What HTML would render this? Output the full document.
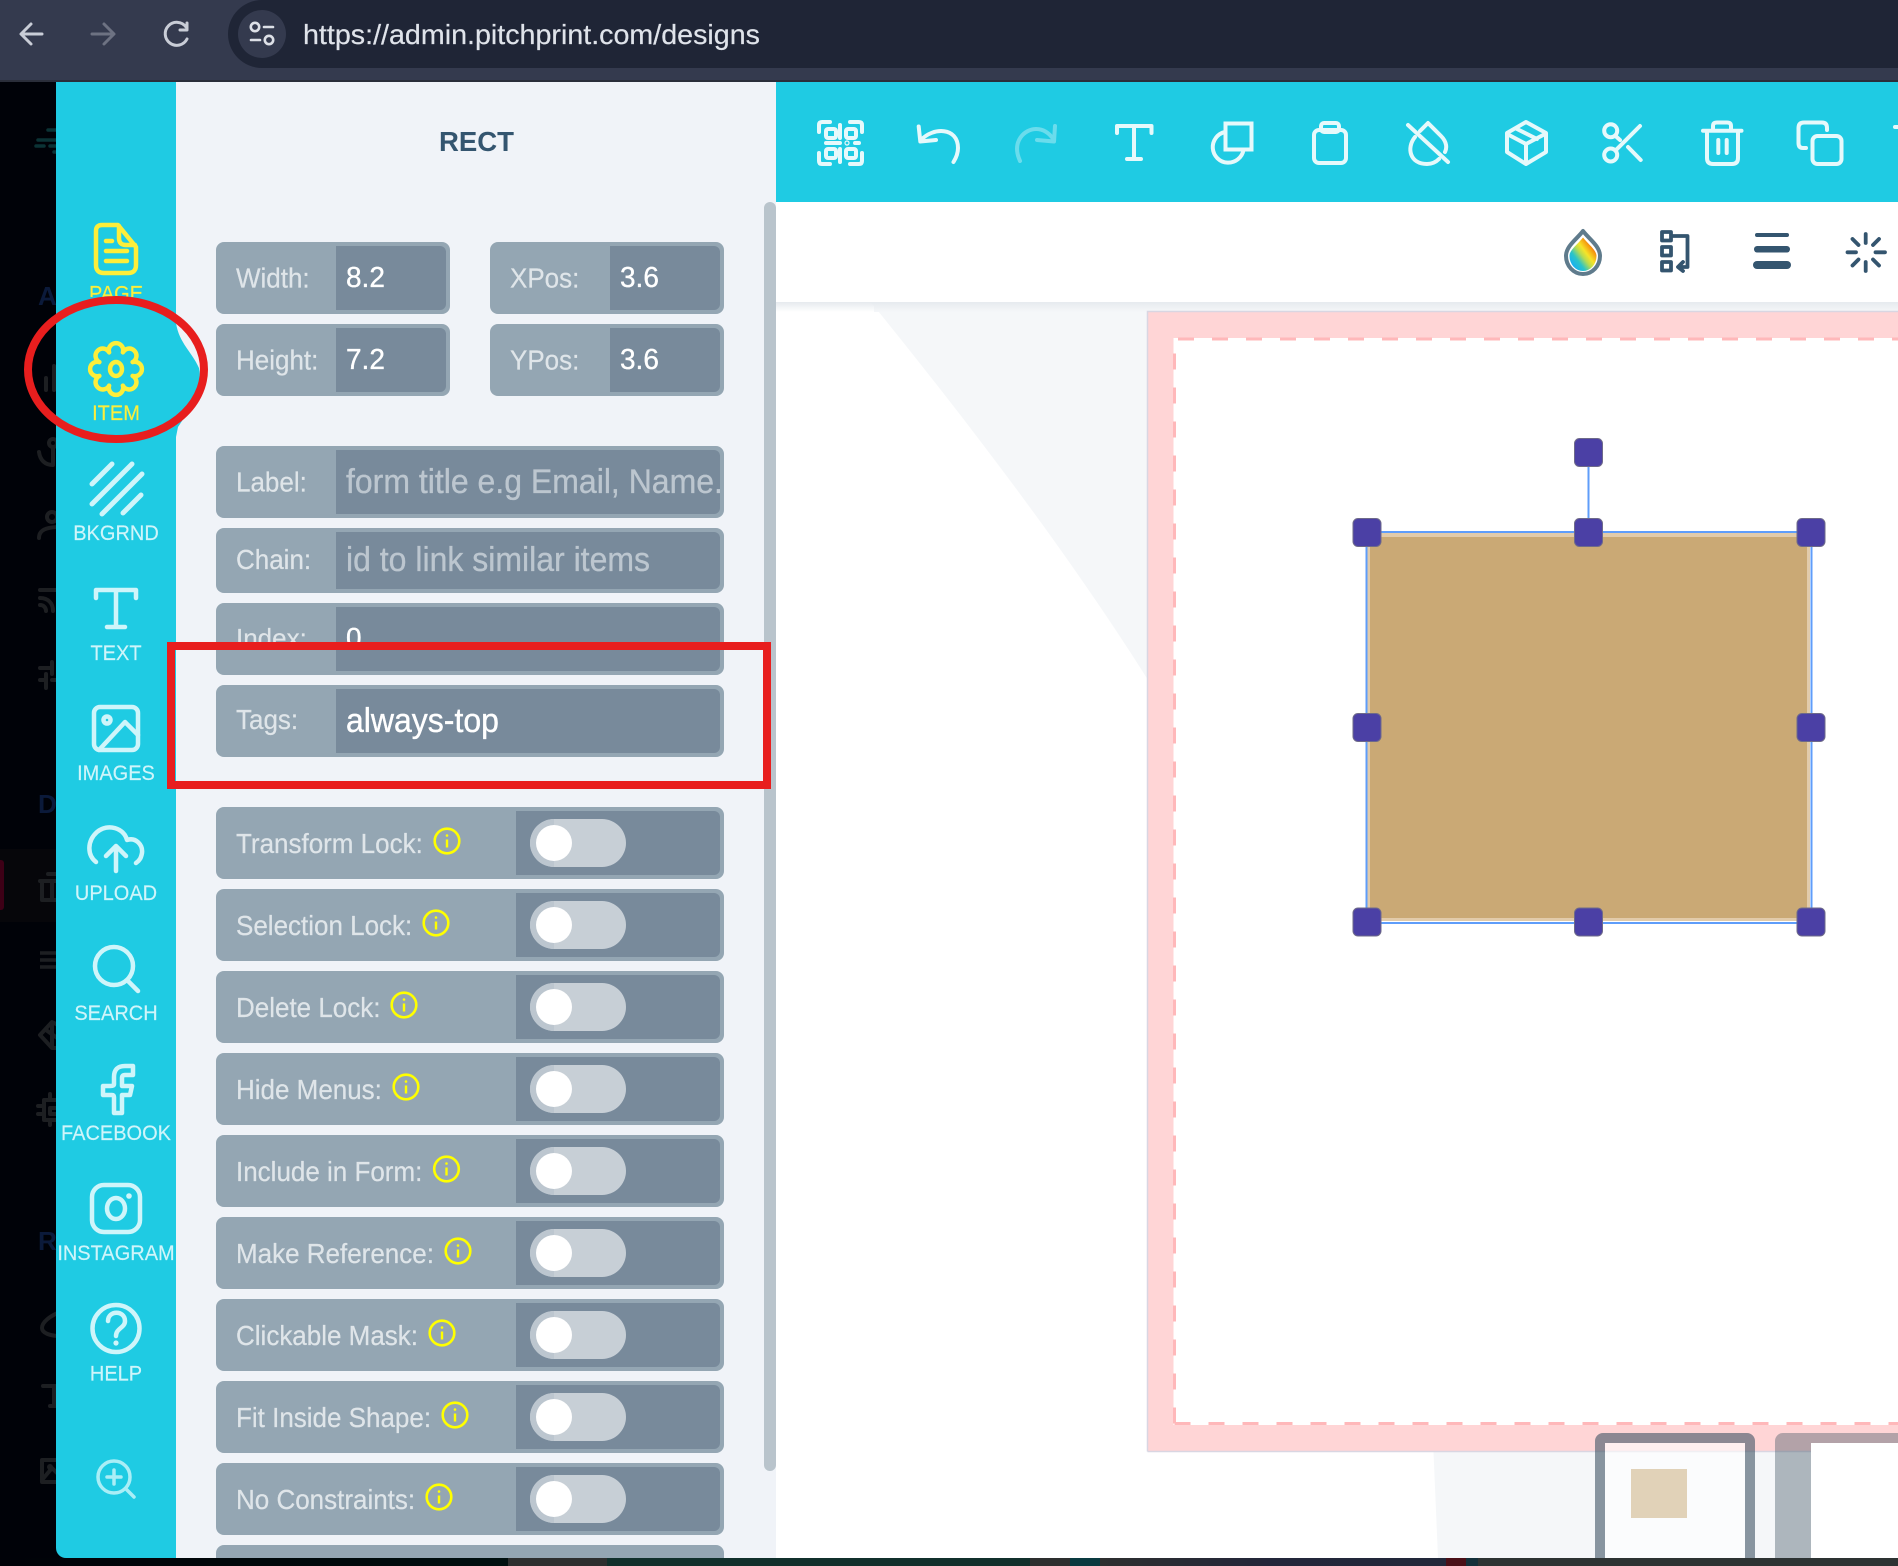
<!DOCTYPE html>
<html>
<head>
<meta charset="utf-8">
<title>PitchPrint designs</title>
<style>
html,body{margin:0;padding:0;width:1898px;height:1566px;overflow:hidden;background:#000208}
svg{display:block;position:absolute;left:0;top:0}
text{font-family:"Liberation Sans",Arial,sans-serif}
.lb{font-size:26px;fill:#dfe5e9;stroke:#dfe5e9;stroke-width:.2}
.v{font-size:28px;fill:#fff;stroke:#fff;stroke-width:.35}
.ph{font-size:32px;fill:#bcc6cf;stroke:#bcc6cf;stroke-width:.3}
.sl{font-size:20px;fill:#cff5fa;text-anchor:middle;stroke:#cff5fa;stroke-width:.15}
.ic{fill:none;stroke:#cff5fa;stroke-width:4.5;stroke-linecap:round;stroke-linejoin:round}
.yi{fill:none;stroke:#fdee3a;stroke-width:4.5;stroke-linecap:round;stroke-linejoin:round}
.tb{fill:none;stroke:#e6f9fb;stroke-width:4;stroke-linecap:round;stroke-linejoin:round}
.dk{fill:none;stroke:#34556f;stroke-width:3.8;stroke-linecap:round;stroke-linejoin:round}
.dim{fill:none;stroke:#1d1f22;stroke-width:4;stroke-linecap:round;stroke-linejoin:round}
</style>
</head>
<body>
<svg width="1898" height="1566" viewBox="0 0 1898 1566" xmlns="http://www.w3.org/2000/svg">
<defs>
  <linearGradient id="rb" x1="0.1" y1="0.95" x2="0.9" y2="0.2">
    <stop offset="0" stop-color="#12a8ff"/><stop offset=".3" stop-color="#2ac4c8"/>
    <stop offset=".5" stop-color="#b8dc50"/><stop offset=".65" stop-color="#f6e428"/>
    <stop offset=".85" stop-color="#f59a10"/><stop offset="1" stop-color="#e85010"/>
  </linearGradient>
  <linearGradient id="sh" x1="0" y1="0" x2="0" y2="1">
    <stop offset="0" stop-color="#e6eaee"/><stop offset="1" stop-color="#e6eaee" stop-opacity="0"/>
  </linearGradient>
  <linearGradient id="bl" x1="0" y1="0" x2="1" y2="0">
    <stop offset="0" stop-color="#000208"/><stop offset=".7" stop-color="#000a0c"/><stop offset="1" stop-color="#001010"/>
  </linearGradient>
  <linearGradient id="bm" x1="0" y1="0" x2="1" y2="0">
    <stop offset="0" stop-color="#2d2f2f"/><stop offset=".5" stop-color="#23263a"/><stop offset="1" stop-color="#22283a"/>
  </linearGradient>
  <clipPath id="pgc"><rect x="56" y="270" width="120" height="27"/></clipPath>
  <clipPath id="idx"><rect x="216" y="603" width="508" height="40"/></clipPath>
  <clipPath id="lblc"><rect x="336" y="450" width="384" height="64"/></clipPath>
  <clipPath id="stripc"><rect x="0" y="82" width="56" height="1476"/></clipPath>
  <clipPath id="cv"><rect x="776" y="302" width="1122" height="1256"/></clipPath>
  <clipPath id="pan"><rect x="176" y="82" width="600" height="1476"/></clipPath>
  <g id="tg">
    <rect x="216" y="0" width="508" height="72" rx="8" fill="#94a6b3"/>
    <path d="M516 4H714a6 6 0 0 1 6 6V62a6 6 0 0 1-6 6H516Z" fill="#788a9b"/>
    <rect x="530" y="12" width="96" height="48" rx="24" fill="#c7cfd6"/>
    <path d="M554 12a24 24 0 0 0 0 48Z" fill="#bcc6cf"/>
    <ellipse cx="554" cy="36" rx="18" ry="18" fill="#fff"/>
  </g>
  <g id="inf" fill="none" stroke="#ffff00" stroke-width="2.6">
    <circle r="12.3"/>
    <path d="M0 -1.5V6.5" stroke-width="2.4"/>
    <circle cy="-5.5" r="1.3" fill="#ffff00" stroke="none"/>
  </g>
</defs>

<!-- browser chrome -->
<rect width="1898" height="80" fill="#343a4e"/>
<rect y="80" width="1898" height="2" fill="#2a2e3a"/>
<path d="M262 0H1898V68H262A34 34 0 0 1 228 34A34 34 0 0 1 262 0Z" fill="#1f2536"/>
<circle cx="262" cy="34" r="24" fill="#343a4e"/>
<g fill="none" stroke="#c9cdd7" stroke-width="3" stroke-linecap="round" stroke-linejoin="round">
  <path d="M42 34H22M31 24L21 34L31 44"/>
</g>
<g fill="none" stroke="#6d7282" stroke-width="3" stroke-linecap="round" stroke-linejoin="round">
  <path d="M92 34H113M104 24L114 34L104 44"/>
</g>
<g fill="none" stroke="#c9cdd7" stroke-width="3" stroke-linecap="round" stroke-linejoin="round">
  <path d="M186 27A11.5 11.5 0 1 0 187 39"/>
  <path d="M187 23V30H180"/>
</g>
<g fill="none" stroke="#dde0e7" stroke-width="2.6" stroke-linecap="round">
  <circle cx="255" cy="27" r="4.2"/>
  <path d="M264 27H273M251 40H260"/>
  <circle cx="269" cy="40" r="4.2"/>
</g>
<text x="303" y="44" font-size="28" fill="#dfe3ea" stroke="#dfe3ea" stroke-width=".2" textLength="457" lengthAdjust="spacingAndGlyphs">https://admin.pitchprint.com/designs</text>

<!-- dim left strip -->
<rect y="82" width="56" height="1476" fill="#000208"/>
<rect y="849" width="56" height="73" fill="#06060a"/>
<path d="M0 860H1a3 3 0 0 1 3 3V907a3 3 0 0 1-3 3H0Z" fill="#3d0016"/>
<g clip-path="url(#stripc)">
  <g stroke="#0b3335" stroke-width="3.5" stroke-linecap="round" fill="none">
    <path d="M48 130H60M38 140H60M36 146H44M50 146H60M54 152H60"/>
  </g>
  <text x="38" y="305" font-size="26" font-weight="bold" fill="#0b1a3a">A</text>
  <text x="38" y="813" font-size="26" font-weight="bold" fill="#0b1a3a">D</text>
  <text x="38" y="1250" font-size="26" font-weight="bold" fill="#0b1a3a">R</text>
  <path class="dim" d="M46 390V378M54 390V366"/>
  <circle class="dim" cx="53" cy="443" r="4"/>
  <path class="dim" d="M53 447V465C45 465 40 460 39 452"/>
  <circle class="dim" cx="52" cy="517" r="5"/><path class="dim" d="M39 538C39 530 46 527 60 527"/>
  <path class="dim" d="M40 590H60M40 598C48 598 53 603 53 611M40 605C44 605 46 608 46 611"/>
  <path class="dim" d="M40 668H50M58 668H60M40 680H44M52 680H60M52 662V674M46 674V688"/>
  <path class="dim" d="M40 881H60M42 882V900H60M52 881V900M48 874H56"/>
  <path d="M40 953H60M40 960H60M40 967H60" stroke="#1d1f22" stroke-width="3.5" fill="none"/>
  <path class="dim" d="M40 1035L52 1022L60 1026M40 1035L52 1048H60M46 1030L60 1040M52 1024V1048"/>
  <path class="dim" d="M44 1100H60M44 1100V1120H60M50 1108H60V1114H50ZM38 1106H44M38 1114H44M50 1094V1100M50 1120V1125"/>
  <path class="dim" d="M60 1312C50 1316 42 1322 42 1328C42 1333 50 1336 60 1336"/>
  <path class="dim" d="M43 1386H60M54 1386V1406M50 1406H60"/>
  <path class="dim" d="M60 1460H42V1482H60M42 1480L52 1468L60 1476"/><circle cx="50" cy="1467" r="3" fill="#1d1f22"/>
</g>

<!-- right region -->
<rect x="776" y="82" width="1122" height="120" fill="#1fcbe3"/>
<rect x="776" y="202" width="1122" height="100" fill="#fff"/>
<rect x="776" y="302" width="1122" height="1256" fill="#fff"/>
<g clip-path="url(#cv)">
  <rect x="874" y="302" width="1024" height="10" fill="#f5f7f9"/>
  <path d="M870 302H1160V680H1148C1060 540 950 400 874 306Z" fill="#f5f7f9"/>
  <path d="M1433 1440H1898V1558H1438Z" fill="#f5f7f9"/>
</g>
<rect x="776" y="302" width="1122" height="10" fill="url(#sh)"/>
<!-- bleed / canvas -->
<rect x="1148" y="312" width="750" height="1139" fill="#ffd5d6"/>
<path d="M1147.5 1451.5V311.5H1898M1147.5 1451.5H1898" fill="none" stroke="#d9d6e2" stroke-width="1.5"/>
<rect x="1173.5" y="338" width="724.5" height="1087" fill="#fff"/>
<path d="M1174.5 1423.5V339H1898M1174.5 1423.5H1898" fill="none" stroke="#ffb8ba" stroke-width="3" stroke-dasharray="16 18"/>

<!-- selected object -->
<rect x="1367" y="533" width="443" height="388" fill="#e2cbaa"/>
<rect x="1370" y="537" width="437" height="381" fill="#caa975"/>
<rect x="1366.5" y="532" width="445" height="391" fill="none" stroke="#5f9dfa" stroke-width="2"/>
<path d="M1588.5 452V532" stroke="#5f9dfa" stroke-width="2"/>
<g fill="#4b40a5" stroke="#6e6a8a" stroke-width="1">
  <rect x="1574.5" y="438.5" width="28" height="28" rx="5"/>
  <rect x="1353" y="518.5" width="28" height="28" rx="5"/>
  <rect x="1574.5" y="518.5" width="28" height="28" rx="5"/>
  <rect x="1797" y="518.5" width="28" height="28" rx="5"/>
  <rect x="1353" y="713.5" width="28" height="28" rx="5"/>
  <rect x="1797" y="713.5" width="28" height="28" rx="5"/>
  <rect x="1353" y="908" width="28" height="28" rx="5"/>
  <rect x="1574.5" y="908" width="28" height="28" rx="5"/>
  <rect x="1797" y="908" width="28" height="28" rx="5"/>
</g>

<!-- page thumbs -->
<path d="M1605 1558V1443H1745V1558Z" fill="#fff" fill-opacity=".6"/>
<path d="M1595 1558V1441a8 8 0 0 1 8-8H1747a8 8 0 0 1 8 8V1558H1745V1443H1605V1558Z" fill="#405464" fill-opacity=".6"/>
<rect x="1631" y="1469" width="56" height="49" fill="#e1d2b8"/>
<path d="M1775 1558V1441a8 8 0 0 1 8-8H1898V1443H1811V1558Z" fill="#405464" fill-opacity=".4"/>
<rect x="1811" y="1443" width="87" height="115" fill="#fff"/>

<!-- toolbar icons -->
<g class="tb">
  <path d="M830 122H822Q819 122 819 125V132M850 122H859Q862 122 862 125V132M819 153V161Q819 164 822 164H830M862 153V161Q862 164 859 164H850"/>
  <rect x="826" y="129" width="10" height="9" rx="2"/>
  <rect x="846" y="129" width="10" height="9" rx="2"/>
  <rect x="826" y="149" width="10" height="9" rx="2"/>
  <rect x="846" y="149" width="10" height="9" rx="2"/>
  <path d="M840 125V138M840 149V162M826 143H840M855 143H859"/>
  <circle cx="847" cy="143" r=".6"/>
  <path d="M918.7 126.5L920.3 141.5L936 140"/>
  <path d="M921 140C933 127 958 127 958 148C958 153 956 158 953.5 162"/>
  <path d="M1117 133V126H1151.5V133M1134 126V159M1127 159H1141"/>
  <rect x="1225.5" y="123.5" width="26" height="26" stroke-linecap="square" stroke-linejoin="miter"/>
  <path d="M1225 132A15.5 15.5 0 1 0 1243.5 150"/>
  <rect x="1314" y="130" width="32" height="33" rx="5"/>
  <rect x="1321" y="123" width="18" height="9" rx="3"/>
  <path d="M1408 125L1448 162"/>
  <path d="M1420 131L1428 123L1441 136C1447 142 1447 148 1445 152"/>
  <path d="M1415 137C1406 148 1410 164 1427 164C1432 164 1436 162 1439 159"/>
  <path d="M1526 122L1546 133V152L1526 164L1507 152V133Z"/>
  <path d="M1509 135L1526 144L1545 134M1526 144V162M1517 129L1537 139"/>
  <circle cx="1610.7" cy="130.7" r="6.5"/>
  <circle cx="1610.7" cy="155" r="6.5"/>
  <path d="M1640 126L1616.7 149.3M1615.5 136L1620 140M1628 147L1640.7 160"/>
  <path d="M1703 130.7H1741.5M1713 130V126Q1713 122.5 1717 122.5H1727Q1731 122.5 1731 126V130M1707 131V158Q1707 164 1713 164H1732Q1738 164 1738 158V131M1718.3 140V153M1726.7 140V153"/>
  <path d="M1806 148H1803Q1798.5 148 1798.5 143V128Q1798.5 122.5 1804 122.5H1822Q1827 122.5 1827 128V130"/>
  <rect x="1812.5" y="136" width="29" height="28" rx="5"/>
  <path d="M1895 127H1898"/>
</g>
<g class="tb" opacity=".38">
  <path d="M1055 126L1054 141.5L1037 140"/>
  <path d="M1020 161C1011 141 1025 129 1036 129C1044 129 1050 134 1054 140"/>
</g>

<!-- second row icons -->
<path d="M1583 231C1577 239 1566 246 1566 256A17 18 0 0 0 1600 256C1600 246 1589 239 1583 231Z" fill="#fff" stroke="#5f7b8c" stroke-width="4" stroke-linejoin="round"/>
<path d="M1583 237.5C1578 244 1569.5 250 1569.5 256A13.5 15 0 0 0 1596.5 256C1596.5 250 1588 244 1583 237.5Z" fill="url(#rb)"/>
<g class="dk">
  <rect x="1662" y="232" width="9" height="8.5"/>
  <rect x="1662" y="247" width="9" height="8.5"/>
  <rect x="1662" y="262" width="9" height="8.5"/>
  <path d="M1672 236H1687.5V267H1679M1683 262L1678 267L1683 271"/>
  <path d="M1865.7 234V243M1865.7 262V271M1847.5 252.3H1856M1875.5 252.3H1885M1852.5 239L1858.5 245M1879 239L1873 245M1852.5 265.5L1858.5 259.5M1879 265.5L1873 259.5"/>
</g>
<g fill="#34556f">
  <rect x="1755" y="233" width="34" height="4" rx="2"/>
  <rect x="1754" y="246" width="36" height="6.5" rx="3.2"/>
  <rect x="1753" y="261" width="38" height="8" rx="4"/>
</g>

<!-- panel -->
<rect x="176" y="82" width="600" height="1476" fill="#f0f3f8"/>
<rect x="764" y="202" width="12" height="1269" rx="6" fill="#b9c4cc"/>
<text x="439" y="151" font-size="28" font-weight="bold" fill="#34556f" textLength="75" lengthAdjust="spacingAndGlyphs">RECT</text>

<!-- numeric fields -->
<g fill="#94a6b3">
  <rect x="216" y="242" width="234" height="72" rx="8"/>
  <rect x="490" y="242" width="234" height="72" rx="8"/>
  <rect x="216" y="324" width="234" height="72" rx="8"/>
  <rect x="490" y="324" width="234" height="72" rx="8"/>
  <rect x="216" y="446" width="508" height="72" rx="8"/>
  <rect x="216" y="528" width="508" height="65" rx="8"/>
  <rect x="216" y="603" width="508" height="72" rx="8"/>
  <rect x="216" y="685" width="508" height="72" rx="8"/>
</g>
<g fill="#788a9b">
  <path d="M336 246H440a6 6 0 0 1 6 6V304a6 6 0 0 1-6 6H336Z"/>
  <path d="M610 246H714a6 6 0 0 1 6 6V304a6 6 0 0 1-6 6H610Z"/>
  <path d="M336 328H440a6 6 0 0 1 6 6V386a6 6 0 0 1-6 6H336Z"/>
  <path d="M610 328H714a6 6 0 0 1 6 6V386a6 6 0 0 1-6 6H610Z"/>
  <path d="M336 450H714a6 6 0 0 1 6 6V508a6 6 0 0 1-6 6H336Z"/>
  <path d="M336 532H714a6 6 0 0 1 6 6V583a6 6 0 0 1-6 6H336Z"/>
  <path d="M336 607H714a6 6 0 0 1 6 6V665a6 6 0 0 1-6 6H336Z"/>
  <path d="M336 689H714a6 6 0 0 1 6 6V747a6 6 0 0 1-6 6H336Z"/>
</g>
<text class="lb" transform="translate(236 287.5) scale(1 1.06)">Width:</text>
<text class="v" transform="translate(346 287) scale(1 1.04)">8.2</text>
<text class="lb" transform="translate(510 287.5) scale(1 1.06)">XPos:</text>
<text class="v" transform="translate(620 287) scale(1 1.04)">3.6</text>
<text class="lb" transform="translate(236 369.5) scale(1 1.06)">Height:</text>
<text class="v" transform="translate(346 369) scale(1 1.04)">7.2</text>
<text class="lb" transform="translate(510 369.5) scale(1 1.06)">YPos:</text>
<text class="v" transform="translate(620 369) scale(1 1.04)">3.6</text>
<text class="lb" transform="translate(236 491.5) scale(1 1.06)">Label:</text>
<g clip-path="url(#lblc)"><text class="ph" transform="translate(346 493) scale(1 1.06)">form title e.g Email, Name...</text></g>
<text class="lb" transform="translate(236 569) scale(1 1.06)">Chain:</text>
<text class="ph" transform="translate(346 571) scale(1 1.06)">id to link similar items</text>
<g clip-path="url(#idx)">
  <text class="lb" x="236" y="647">Index:</text>
  <text class="v" x="346" y="647">0</text>
</g>
<text class="lb" transform="translate(236 729) scale(1 1.06)">Tags:</text>
<text transform="translate(346 732) scale(1 1.06)" font-size="32" fill="#fff" stroke="#fff" stroke-width=".35">always-top</text>

<!-- toggle rows -->
<use href="#tg" y="807"/><text class="lb" transform="translate(236 853) scale(1 1.06)">Transform Lock:</text><use href="#inf" x="447" y="841"/>
<use href="#tg" y="889"/><text class="lb" transform="translate(236 935) scale(1 1.06)">Selection Lock:</text><use href="#inf" x="436" y="923"/>
<use href="#tg" y="971"/><text class="lb" transform="translate(236 1017) scale(1 1.06)">Delete Lock:</text><use href="#inf" x="404" y="1005"/>
<use href="#tg" y="1053"/><text class="lb" transform="translate(236 1099) scale(1 1.06)">Hide Menus:</text><use href="#inf" x="406" y="1087"/>
<use href="#tg" y="1135"/><text class="lb" transform="translate(236 1181) scale(1 1.06)">Include in Form:</text><use href="#inf" x="446.5" y="1169"/>
<use href="#tg" y="1217"/><text class="lb" transform="translate(236 1263) scale(1 1.06)">Make Reference:</text><use href="#inf" x="458" y="1251"/>
<use href="#tg" y="1299"/><text class="lb" transform="translate(236 1345) scale(1 1.06)">Clickable Mask:</text><use href="#inf" x="442" y="1333"/>
<use href="#tg" y="1381"/><text class="lb" transform="translate(236 1427) scale(1 1.06)">Fit Inside Shape:</text><use href="#inf" x="455" y="1415"/>
<use href="#tg" y="1463"/><text class="lb" transform="translate(236 1509) scale(1 1.06)">No Constraints:</text><use href="#inf" x="439" y="1497"/>
<path d="M216 1558V1553a8 8 0 0 1 8-8H716a8 8 0 0 1 8 8V1558Z" fill="#94a6b3"/>

<!-- sidebar -->
<path d="M56 82H176V1558H66A10 10 0 0 1 56 1548Z" fill="#1fcbe3"/>
<path d="M176 323C179 343 192 352 199 368C203 385 190 410 178 427L176 437Z" fill="#1fcbe3"/>

<path class="yi" d="M102 225H118L136 247V265Q136 273 128 273H104Q96 273 96 265V231Q96 225 102 225Z"/>
<path class="yi" d="M119 226V238Q119 245 126 245H135"/>
<path class="yi" d="M106 241H112M106 251H127M106 261H127"/>
<g clip-path="url(#pgc)"><text class="sl" style="fill:#fdee3a;stroke:#fdee3a" transform="translate(116 300.5) scale(1 1.05)">PAGE</text></g>

<path class="yi" d="M132.63 375.89A7.2 7.2 0 1 1 122.89 385.63A7.2 7.2 0 1 1 109.11 385.63A7.2 7.2 0 1 1 99.37 375.89A7.2 7.2 0 1 1 99.37 362.11A7.2 7.2 0 1 1 109.11 352.37A7.2 7.2 0 1 1 122.89 352.37A7.2 7.2 0 1 1 132.63 362.11A7.2 7.2 0 1 1 132.63 375.89Z"/>
<ellipse class="yi" cx="116" cy="369" rx="6" ry="7"/>
<text class="sl" style="fill:#fdee3a;stroke:#fdee3a" transform="translate(116 420) scale(1 1.05)">ITEM</text>

<path class="ic" style="stroke-width:5" d="M92 484L112 464M92 504L132 464M102 514L142 474M123 513L141 495"/>
<text class="sl" transform="translate(116 540) scale(1 1.05)">BKGRND</text>

<path class="ic" d="M96 598V590H136V598M116 590V627M107 627H125"/>
<text class="sl" transform="translate(116 660) scale(1 1.05)">TEXT</text>

<rect class="ic" x="94" y="707" width="44" height="43" rx="6"/>
<circle class="ic" cx="107" cy="720" r="3.5"/>
<path class="ic" d="M99 750L125 722L138 735"/>
<text class="sl" transform="translate(116 780) scale(1 1.05)">IMAGES</text>

<path class="ic" d="M96 862C87 855 87 841 97 832C108 823 124 828 127 840C136 837 143 845 142 853C141 858 140 860 136 863"/>
<path class="ic" d="M116 871V847M106 856L116 846L126 856"/>
<text class="sl" transform="translate(116 900) scale(1 1.05)">UPLOAD</text>

<circle class="ic" cx="114" cy="966" r="19"/>
<path class="ic" d="M128 981L138 991"/>
<text class="sl" transform="translate(116 1020) scale(1 1.05)">SEARCH</text>

<path class="ic" transform="translate(0 1)" d="M133 1065H125Q114 1065 114 1076V1083Q114 1085 110 1085H103V1094H112Q114 1094 114 1096V1112H122V1094H130L132 1085H122V1077Q122 1074 125 1074H133Z"/>
<text class="sl" transform="translate(116 1140) scale(1 1.05)">FACEBOOK</text>

<rect class="ic" x="92" y="1185" width="48" height="47" rx="12"/>
<ellipse class="ic" cx="116" cy="1208.5" rx="9" ry="10.5"/>
<circle cx="129" cy="1196" r="2.8" fill="#cff5fa"/>
<text class="sl" transform="translate(116 1260) scale(1 1.05)">INSTAGRAM</text>

<circle class="ic" cx="116" cy="1328.5" r="23.5"/>
<path class="ic" d="M108 1321C108 1310 125 1310 125 1321C125 1328 116 1328 116 1336"/>
<circle cx="116" cy="1343" r="2.6" fill="#cff5fa"/>
<text class="sl" transform="translate(116 1380.5) scale(1 1.05)">HELP</text>

<g fill="none" stroke="#aaeef6" stroke-width="3.5" stroke-linecap="round">
  <circle cx="114" cy="1477" r="16"/>
  <path d="M126 1489L134 1497M114 1470V1484M107 1477H121"/>
</g>

<!-- annotations -->
<ellipse cx="116" cy="369.5" rx="88" ry="69.5" fill="none" stroke="#e81e1e" stroke-width="8"/>
<rect x="171" y="646" width="596" height="139" fill="none" stroke="#e81e1e" stroke-width="8"/>

<!-- bottom bar -->
<rect y="1558" width="1898" height="8" fill="#2d3333"/>
<rect y="1558" width="508" height="8" fill="url(#bl)"/>
<rect x="508" y="1558" width="99" height="8" fill="#2d2f2f"/>
<rect x="607" y="1558" width="423" height="8" fill="#11302c"/>
<rect x="1030" y="1558" width="40" height="8" fill="#2d2f2f"/>
<rect x="1070" y="1558" width="30" height="8" fill="#0a3a40"/>
<rect x="1100" y="1558" width="346" height="8" fill="url(#bm)"/>
<rect x="1446" y="1558" width="20" height="8" fill="#4a1018"/>
<rect x="1466" y="1558" width="12" height="8" fill="#14303a"/>
</svg>
</body>
</html>
